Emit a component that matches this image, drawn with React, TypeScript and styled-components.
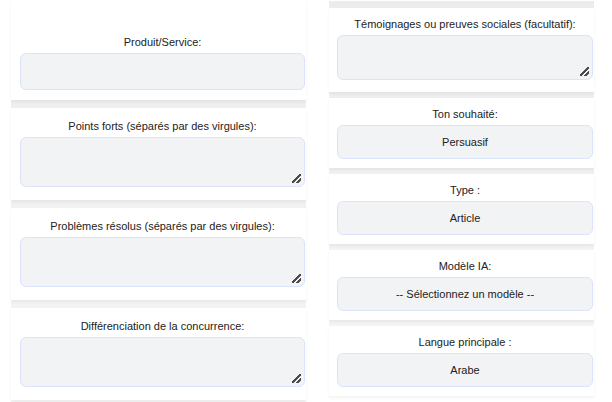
import React from "react";
import styled, { createGlobalStyle } from "styled-components";

const Global = createGlobalStyle`
  html, body { margin: 0; padding: 0; background: #ffffff; }
  body { font-family: "Liberation Sans", Arial, sans-serif; }
  * { box-sizing: border-box; }
`;

const Page = styled.div`
  display: flex;
  align-items: flex-start;
  gap: 23px;
  padding-left: 11px;
  height: 402px;
  overflow: hidden;
`;

const Column = styled.div<{ $width: number; $offset: number }>`
  width: ${(p) => p.$width}px;
  margin-top: ${(p) => p.$offset}px;
  padding-top: ${(p) => (p.$offset ? 7 : 0)}px;
  padding-bottom: ${(p) => (p.$offset ? 0 : 20)}px;
  background: linear-gradient(#ececec, #f6f6f6);
  display: flex;
  flex-direction: column;
  gap: ${(p) => (p.$offset ? 6 : 8)}px;
`;

const Card = styled.div<{ $top: number; $bottom: number; $left: number }>`
  background: #ffffff;
  box-shadow: 0 2px 3px rgba(0, 0, 0, 0.05);
  padding: ${(p) => p.$top}px 1px ${(p) => p.$bottom}px ${(p) => p.$left}px;
  display: flex;
  flex-direction: column;
`;

const Label = styled.label`
  display: block;
  text-align: center;
  font-size: 11px;
  line-height: 13px;
  color: #222222;
  margin-bottom: 4px;
`;

const fieldBase = `
  width: 100%;
  background: #f2f3f5;
  border: 1px solid #dbe3fb;
  border-radius: 6px;
  font-family: "Liberation Sans", Arial, sans-serif;
  font-size: 11px;
  color: #222222;
  outline: none;
  margin: 0;
`;

const TextInput = styled.input`
  ${fieldBase}
  display: block;
  height: 37px;
  padding: 0 8px;
`;

const TextArea = styled.textarea<{ $h: number }>`
  ${fieldBase}
  display: block;
  height: ${(p) => p.$h}px;
  padding: 6px 8px;
  margin-bottom: 3px;
  resize: vertical;
  &::-webkit-resizer {
    background: linear-gradient(
        135deg,
        transparent 0 44%,
        #4a4a4a 44% 56%,
        transparent 56% 72%,
        #4a4a4a 72% 86%,
        transparent 86%
      )
      no-repeat;
    background-size: 9px 9px;
    background-position: 3px 3px;
  }
`;

const Select = styled.select`
  ${fieldBase}
  display: block;
  height: 34px;
  padding: 0 8px;
  appearance: none;
  -webkit-appearance: none;
  text-align: center;
  text-align-last: center;
`;

export default function App() {
  return (
    <>
      <Global />
      <Page>
        <Column $width={295} $offset={0}>
          <Card $top={36} $bottom={10} $left={9}>
            <Label>Produit/Service:</Label>
            <TextInput type="text" />
          </Card>
          <Card $top={12} $bottom={10} $left={9}>
            <Label>Points forts (séparés par des virgules):</Label>
            <TextArea $h={50} />
          </Card>
          <Card $top={12} $bottom={10} $left={9}>
            <Label>Problèmes résolus (séparés par des virgules):</Label>
            <TextArea $h={50} />
          </Card>
          <Card $top={12} $bottom={10} $left={9}>
            <Label>Différenciation de la concurrence:</Label>
            <TextArea $h={50} />
          </Card>
        </Column>
        <Column $width={265} $offset={1}>
          <Card $top={10} $bottom={9} $left={8}>
            <Label>Témoignages ou preuves sociales (facultatif):</Label>
            <TextArea $h={45} />
          </Card>
          <Card $top={10} $bottom={9} $left={8}>
            <Label>Ton souhaité:</Label>
            <Select defaultValue="persuasif">
              <option value="persuasif">Persuasif</option>
            </Select>
          </Card>
          <Card $top={10} $bottom={9} $left={8}>
            <Label>Type :</Label>
            <Select defaultValue="article">
              <option value="article">Article</option>
            </Select>
          </Card>
          <Card $top={10} $bottom={9} $left={8}>
            <Label>Modèle IA:</Label>
            <Select defaultValue="">
              <option value="">-- Sélectionnez un modèle --</option>
            </Select>
          </Card>
          <Card $top={10} $bottom={9} $left={8}>
            <Label>Langue principale :</Label>
            <Select defaultValue="ar">
              <option value="ar">Arabe</option>
            </Select>
          </Card>
        </Column>
      </Page>
    </>
  );
}
